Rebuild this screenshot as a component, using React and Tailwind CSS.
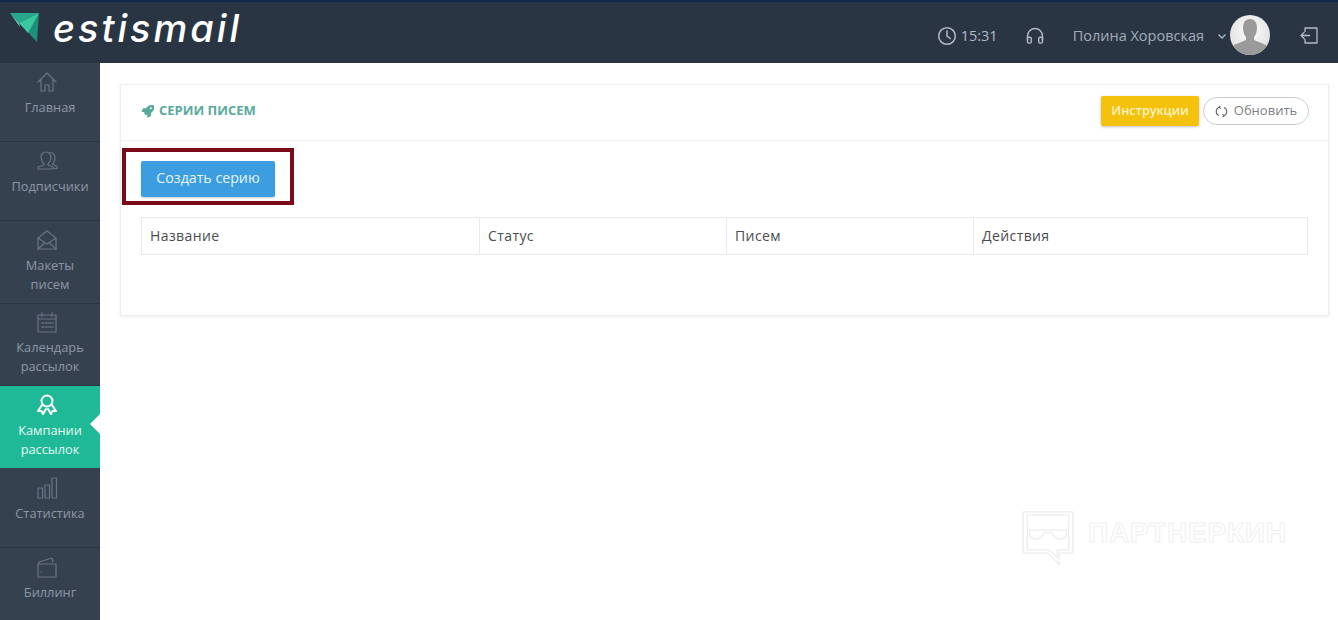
import React from "react";

function NavItem({ label, icon, h, active, last, pt }) {
  return (
    <div className={`relative flex flex-col items-center text-center text-[12.800px] leading-[19px] ${h} ${pt} ${active ? "bg-[#20b997] text-[#e4f7f2]" : "text-[#8c97a5]"} ${last || active ? "" : "border-b border-[#2b3542]"}`}>
      <div className={`h-6 w-6 mb-[4px] mr-[6px] ${active ? "text-white" : "text-[#687384]"}`}>{icon}</div>
      <div className="whitespace-pre-line">{label}</div>
      {active && <div className="absolute right-0 top-[28px] w-0 h-0 border-y-[10px] border-y-transparent border-r-[10px] border-r-white" />}
    </div>
  );
}

const S = ({ children, sw = 1.2 }) => (
  <svg viewBox="0 0 24 24" width="24" height="24" fill="none" stroke="currentColor" strokeWidth={sw} strokeLinejoin="round" strokeLinecap="round">{children}</svg>
);

const Home = <S><path d="M3 12 12 3l9 9M6 10v11h4v-6h4v6h4V10" /></S>;
const Users = <S><path d="M9 15c-1-1-3-3-3-7a5 5 0 0 1 10 0c0 4-2 6-3 7v1l5 2v2H3v-2l6-2z" /><path d="M15 3.500a5 5 0 0 1 5 5c0 3-1 5-2 6v1l4 2v2h-3" /></S>;
const Mail = <S><path d="M3 10 12 3l9 7v11H3z" /><path d="M3 10l9 6 9-6M3 21l7-6.500M21 21l-7-6.500" /></S>;
const Cal = <S><rect x="3" y="5" width="18" height="17" /><path d="M7 2.500v4M17 2.500v4M3 9h18" /><path strokeDasharray="1.500 2" strokeWidth="1.600" d="M7 13h11M7 17h11" /></S>;
const Award = <S sw={2}><circle cx="12" cy="8" r="5.500" /><path d="M7 12 3 18l3.500 0 1.500 3 3-5M17 12l4 6-3.500 0-1.500 3-3-5" /></S>;
const Bars = <S><rect x="3" y="12" width="4.500" height="10" /><rect x="10" y="9" width="4.500" height="13" /><rect x="17" y="2" width="4.500" height="20" /></S>;
const Wallet = <S><path d="M3 10 4 7l13-4 1 4M3 9h18v13H3z" /><path d="M6 17h1" /></S>;

function Th({ w, children, last }) {
  return <div className={`${w} px-[8px] pb-[2px] flex items-center ${last ? "" : "border-r border-[#e7eaee]"}`}>{children}</div>;
}

export default function App() {
  return (
    <div className="w-[1338px] h-[620px] overflow-hidden relative bg-white font-['Open_Sans',sans-serif]">
      <header className="h-[63px] bg-[#2a3543] border-t-2 border-[#0f2a4a] flex items-center">
        <div className="w-[100px] flex items-center relative shrink-0">
          <svg viewBox="0 0 30 30" width="30" height="30" className="ml-[10px] mb-[9px]">
            <polygon points="0,0 29,0 9,10" fill="#25a98c" />
            <polygon points="29,0 9,10 27,29" fill="#1d8f78" />
            <polygon points="0,0 9,10 10,14" fill="#6fd0b8" />
            <polygon points="29,0 9,10 18,20" fill="#3cc7a3" />
          </svg>
          <span className="absolute left-[53px] top-[-7px] text-[38px] leading-[44px] italic font-medium tracking-[3px] text-white font-['Inter',sans-serif]">estismail</span>
        </div>
        <div className="ml-auto flex items-center text-[#b3bbc5] text-[15px] pt-[5px]">
          <svg className="mt-[2px]" viewBox="0 0 24 24" width="20" height="20" fill="none" stroke="currentColor" strokeWidth="1.800" strokeLinecap="round"><circle cx="12" cy="12" r="10" /><path d="M12 6v6l4 3" /></svg>
          <span className="ml-[4px] mt-[2px] text-[14.500px]">15:31</span>
          <svg className="ml-[27px] mt-[2px]" viewBox="0 0 24 24" width="20" height="20" fill="none" stroke="currentColor" strokeWidth="1.700" strokeLinejoin="round"><path d="M3 17v-5a9 9 0 0 1 18 0v5" /><rect x="3" y="13.500" width="4.500" height="7" rx="1.500" /><rect x="16.500" y="13.500" width="4.500" height="7" rx="1.500" /></svg>
          <span className="ml-[28px] mt-[2px] text-[14.500px] text-[#a3adb9]">Полина Хоровская</span>
          <svg className="ml-[13px] mt-[2px]" viewBox="0 0 10 10" width="10" height="10" fill="none" stroke="currentColor" strokeWidth="1.300"><path d="M1.500 3.500 5 7l3.500-3.500" /></svg>
          <div className="ml-[3px] w-[40px] h-[40px] rounded-full overflow-hidden">
            <svg viewBox="0 0 40 40" width="40" height="40">
              <defs><radialGradient id="a" cx="50%" cy="40%" r="70%"><stop offset="0" stopColor="#ffffff" /><stop offset="1" stopColor="#d9d9d9" /></radialGradient></defs>
              <rect width="40" height="40" fill="url(#a)" />
              <path d="M20 4c5 0 7 4 7 9 0 3-1 7-3 9v3l12 5v10H4V30l12-5v-3c-2-2-3-6-3-9 0-5 2-9 7-9z" fill="#9a9a9a" />
            </svg>
          </div>
          <svg className="ml-[29px] mr-[19px] mt-[2px]" viewBox="0 0 20 20" width="20" height="20" fill="none" stroke="#b3bbc5" strokeWidth="1.300" strokeLinejoin="round"><path d="M6 6V2h12v15H6v-4M11 9.500H2M5.500 6 2 9.500 5.500 13" /></svg>
        </div>
      </header>
      <div className="flex h-[557px]">
        <aside className="w-[100px] shrink-0 bg-[#364150] flex flex-col">
          <NavItem label="Главная" icon={Home} h="h-[79px]" pt="pt-[7px]" />
          <NavItem label="Подписчики" icon={Users} h="h-[79px]" pt="pt-[7px]" />
          <NavItem label={"Макеты\nписем"} icon={Mail} h="h-[83px]" pt="pt-[7px]" />
          <NavItem label={"Календарь\nрассылок"} icon={Cal} h="h-[82px]" pt="pt-[6px]" />
          <NavItem label={"Кампании\nрассылок"} icon={Award} h="h-[82px]" pt="pt-[7px]" active />
          <NavItem label="Статистика" icon={Bars} h="h-[80px]" pt="pt-[8px]" />
          <NavItem label="Биллинг" icon={Wallet} h="flex-1" pt="pt-[7px]" last />
        </aside>
        <main className="flex-1 pl-[20px] pr-[9px] pt-[21px] relative">
          <section className="h-[232px] border border-[#eceef1] shadow-[0_1px_3px_rgba(0,0,0,0.08)] bg-white">
            <div className="h-[56px] border-b border-[#eff1f3] flex items-center pl-[20px] pr-[19px] pb-[3px]">
              <svg viewBox="0 0 512 512" width="13" height="13" fill="#58ab9c"><path d="M505 19c-1-5-6-10-11-11C462 1 437 0 412 0 309 0 247 55 201 128H97c-8 0-18 6-21 13L27 240c-1 3-2 7-2 11 0 13 11 24 24 24h103l-22 22c-11 11-13 32 0 45l51 51c11 11 32 13 45 0l22-22v103c0 13 11 24 24 24 4 0 8-1 11-2l98-49c8-4 13-13 13-21V311c73-46 128-108 128-211 0-25 0-50-7-81zM384 168a40 40 0 1 1 0-80 40 40 0 0 1 0 80z" /></svg>
              <span className="ml-[5px] text-[13px] font-bold text-[#58ab9c] uppercase">Серии писем</span>
              <div className="ml-auto flex items-center">
                <div className="w-[98px] h-[30px] bg-[#f4c20d] rounded-[2px] shadow-[0_1px_3px_rgba(0,0,0,0.25)] flex items-center justify-center text-[12.500px] text-[#fdf3c4] font-semibold">Инструкции</div>
                <div className="ml-[4px] w-[106px] h-[28px] rounded-full border border-[#c9cccf] flex items-center justify-center text-[13px] text-[#7b7f84]">
                  <svg viewBox="0 0 16 16" width="13" height="13" fill="none" stroke="#63676c" strokeWidth="1.400" className="mr-[6px]"><path d="M6 2.500A5.500 5.500 0 0 0 5 13M10 13.500A5.500 5.500 0 0 0 11 3" /><path d="M6.500 1 5 3l2 1.500M9.500 15 11 13l-2-1.500" /></svg>
                  Обновить
                </div>
              </div>
            </div>
            <div className="mt-[7px] ml-[1px] w-[172px] h-[57px] border-[4px] border-[#7a0a18] pl-[15px] pt-[9px]">
              <div className="w-[134px] h-[36px] pb-[2px] bg-[#3c9ee0] rounded-[2px] shadow-[0_1px_2px_rgba(0,0,0,0.2)] flex items-center justify-center text-[14.200px] text-[#e6f5fd] font-medium">Создать серию</div>
            </div>
            <div className="mt-[12px] ml-[20px] w-[1167px] h-[38px] border border-[#e7eaee] flex text-[14px] font-medium tracking-[0.4px] text-[#4a4d50]">
              <Th w="w-[338px]">Название</Th>
              <Th w="w-[247px]">Статус</Th>
              <Th w="w-[247px]">Писем</Th>
              <Th w="flex-1" last>Действия</Th>
            </div>
          </section>
          <div className="absolute left-[920px] top-[447px] flex items-center">
            <svg viewBox="0 0 54 58" width="56" height="58" preserveAspectRatio="none" fill="none" stroke="#efefef" strokeWidth="1.500" strokeLinejoin="round">
              <path d="M3 2h48v41H38v12L27 43H3z" />
              <path d="M7 5h40v35H36v8l-8-8H7z" />
              <path d="M9 20h36v5c-1 3-4 4-7 4-4 0-6-2-7-6h-8c-1 4-3 6-7 6-3 0-6-1-7-4z" />
            </svg>
            <span className="ml-[12px] mb-[12px] text-[28px] leading-[30px] font-bold tracking-[0.8px] text-white font-['Liberation_Sans',sans-serif] [-webkit-text-stroke:1px_#efefef]">ПАРТНЕРКИН</span>
          </div>
        </main>
      </div>
    </div>
  );
}
